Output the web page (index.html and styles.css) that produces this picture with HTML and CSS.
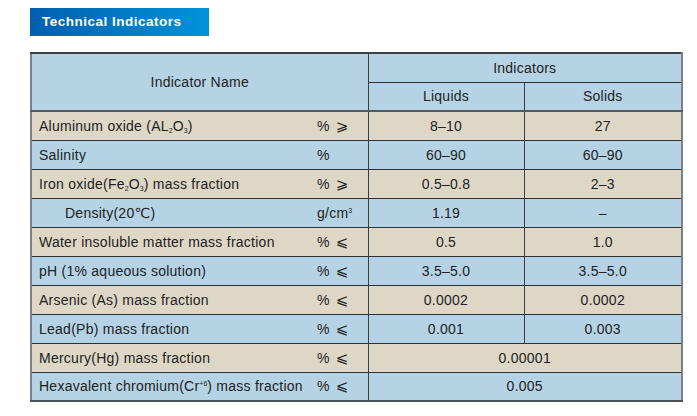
FILE: index.html
```html
<!DOCTYPE html>
<html>
<head>
<meta charset="utf-8">
<link rel="stylesheet" href="styles.css">
</head>
<body>
<div class="page">
  <div class="banner">Technical Indicators</div>
  <table class="spec">
    <colgroup>
      <col class="c-name"><col class="c-unit"><col class="c-liq"><col class="c-sol">
    </colgroup>
    <tr class="blue">
      <th colspan="2" rowspan="2" class="head-name">Indicator Name</th>
      <th colspan="2">Indicators</th>
    </tr>
    <tr class="blue">
      <th>Liquids</th>
      <th>Solids</th>
    </tr>
    <tr class="beige first">
      <td class="name">Aluminum oxide (AL<sub>2</sub>O<sub>3</sub>)</td>
      <td class="unit">%<span class="rel">⩾</span></td>
      <td>8–10</td><td>27</td>
    </tr>
    <tr class="blue">
      <td class="name">Salinity</td>
      <td class="unit">%</td>
      <td>60–90</td><td>60–90</td>
    </tr>
    <tr class="beige">
      <td class="name">Iron oxide(Fe<sub>2</sub>O<sub>3</sub>) mass fraction</td>
      <td class="unit">%<span class="rel">⩾</span></td>
      <td>0.5–0.8</td><td>2–3</td>
    </tr>
    <tr class="blue">
      <td class="name indent">Density(20℃)</td>
      <td class="unit">g/cm<sup>3</sup></td>
      <td>1.19</td><td>–</td>
    </tr>
    <tr class="beige">
      <td class="name">Water insoluble matter mass fraction</td>
      <td class="unit">%<span class="rel">⩽</span></td>
      <td>0.5</td><td>1.0</td>
    </tr>
    <tr class="blue">
      <td class="name">pH (1% aqueous solution)</td>
      <td class="unit">%<span class="rel">⩽</span></td>
      <td>3.5–5.0</td><td>3.5–5.0</td>
    </tr>
    <tr class="beige">
      <td class="name">Arsenic (As) mass fraction</td>
      <td class="unit">%<span class="rel">⩽</span></td>
      <td>0.0002</td><td>0.0002</td>
    </tr>
    <tr class="blue">
      <td class="name">Lead(Pb) mass fraction</td>
      <td class="unit">%<span class="rel">⩽</span></td>
      <td>0.001</td><td>0.003</td>
    </tr>
    <tr class="beige">
      <td class="name">Mercury(Hg) mass fraction</td>
      <td class="unit">%<span class="rel">⩽</span></td>
      <td colspan="2">0.00001</td>
    </tr>
    <tr class="blue">
      <td class="name">Hexavalent chromium(Cr<sup>+6</sup>) mass fraction</td>
      <td class="unit">%<span class="rel">⩽</span></td>
      <td colspan="2">0.005</td>
    </tr>
  </table>
</div>
</body>
</html>
```
FILE: styles.css
```css
html, body {
  margin: 0;
  padding: 0;
  background: #ffffff;
}
.page {
  padding: 8px 0 0 30px;
  font-family: "Liberation Sans", Arial, "DejaVu Sans", sans-serif;
  color: #222222;
}
.banner {
  width: 179px;
  height: 28px;
  box-sizing: border-box;
  padding-left: 12px;
  line-height: 28px;
  font-size: 13.5px;
  font-weight: bold;
  letter-spacing: 0.5px;
  color: #ffffff;
  background: linear-gradient(to right, #005fae, #0093da);
}
.spec {
  margin-top: 16px;
  border-collapse: collapse;
  width: 651px;
  table-layout: fixed;
  font-size: 14px;
  letter-spacing: 0.25px;
  border-top: 2px solid #3a3f44;
  border-left: 2px solid #7a8088;
  border-right: 2px solid #7a8088;
  border-bottom: 2px solid #4a5056;
}
.c-name { width: 285px; }
.c-unit { width: 52px; }
.c-liq { width: 156px; }
.c-sol { width: 158px; }
.spec tr { height: 29px; }
.spec th, .spec td {
  border-top: 1px solid #2c3035;
  border-bottom: 1px solid #2c3035;
  border-left: 1px solid #3a3f44;
  border-right: 1px solid #3a3f44;
  padding: 0;
  text-align: center;
  font-weight: normal;
  vertical-align: middle;
}
.spec td.name {
  text-align: left;
  padding-left: 7px;
  border-right: none;
  white-space: nowrap;
}
.spec td.unit {
  text-align: left;
  padding-left: 1px;
  border-left: none;
  white-space: nowrap;
}
.spec td.indent { padding-left: 33px; }
.spec tr.first td { border-top: 2px solid #555b61; }
.rel {
  margin-left: 6px;
  font-family: "DejaVu Sans", sans-serif;
  font-size: 15px;
  line-height: 1;
}
.blue { background: #b5d3e5; }
.beige { background: #dfd7c6; }
sub, sup {
  font-size: 7px;
  line-height: 0;
  letter-spacing: 0;
}
sub { vertical-align: -2px; }
sup { vertical-align: 5px; }
```
